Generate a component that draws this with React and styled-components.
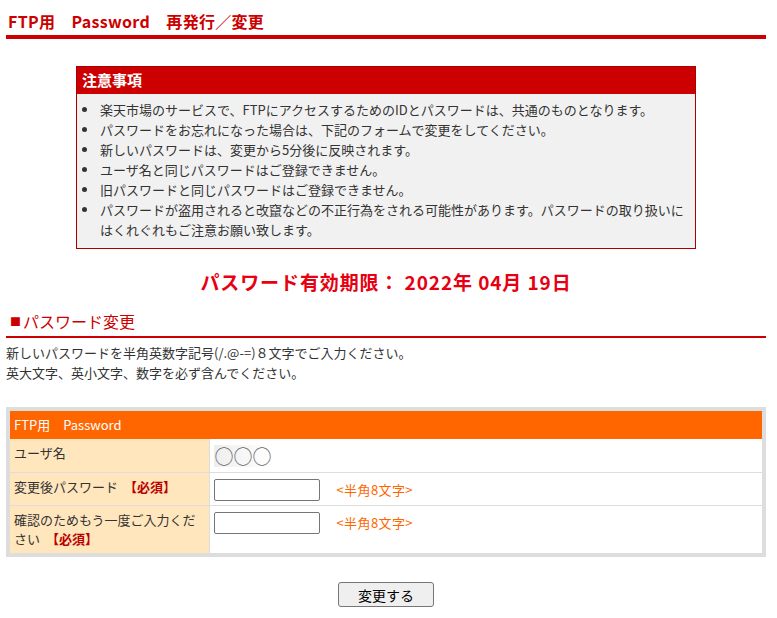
import React from 'react'
import styled, { createGlobalStyle } from 'styled-components'

const GlobalStyle = createGlobalStyle`
body {
  margin: 0;
  background: #fff;
  font-family: "Noto Sans CJK JP", "Liberation Sans", sans-serif;
  color: #333;
}
`

const Page = styled.div`
width: 760px;
margin-left: 6px;
`

const PageTitle = styled.h1`
margin: 0;
padding: 9px 0 2px 2px;
font-size: 16px;
line-height: 24px;
font-weight: bold;
letter-spacing: 0.3px;
color: #c00;
border-bottom: 4px solid #c00;
white-space: pre;
`

const Notice = styled.div`
width: 618px;
margin: 27px 0 0 70px;
border: 1px solid #a00;
background: #f1f1f1;
`

const NoticeHead = styled.div`
height: 27px;
background: #c00;
color: #fff;
font-size: 15px;
font-weight: bold;
line-height: 25px;
padding-left: 5px;
`

const NoticeList = styled.ul`
margin: 0;
padding: 6px 8px 8px 22px;
font-size: 13px;
line-height: 20px;
color: #333;
li { padding-left: 1px; }
`

const Expiry = styled.p`
margin: 19px 0 0;
text-align: center;
font-size: 19px;
line-height: 28px;
font-weight: bold;
letter-spacing: 0.9px;
color: #e60012;
`

const SectionHead = styled.h2`
margin: 12px 0 0;
padding: 2px 0 4px 4px;
font-size: 16px;
line-height: 22px;
font-weight: normal;
color: #c00;
border-bottom: 2px solid #c00;
`

const Square = styled.span`
font-size: 11px;
margin-right: 2px;
vertical-align: 2px;
`

const Lead = styled.p`
margin: 5px 0 0;
font-size: 13px;
line-height: 20px;
color: #333;
`

const FormFrame = styled.div`
margin-top: 24px;
border: 4px solid #ddd;
`

const FormTable = styled.table`
width: 100%;
table-layout: fixed;
border-collapse: collapse;
font-size: 13px;
`

const HeadCell = styled.th`
height: 28px;
padding: 0 4px;
background: #f60;
color: #fff;
font-weight: normal;
text-align: left;
line-height: 28px;
`

const Row = styled.tr`
& + & td, & + & th { border-top: 1px solid #ddd; }
`

const Label = styled.th`
padding: 4px 4px 3px;
background: #ffe6bd;
border-right: 1px solid #ddd;
font-weight: normal;
text-align: left;
vertical-align: top;
line-height: 19px;
height: ${p => p.$h}px;
box-sizing: border-box;
color: #333;
`

const Required = styled.span`
color: #b00;
font-weight: bold;
margin-left: 6px;
`

const Field = styled.td`
padding: 6px 4px 0;
vertical-align: top;
`

const Masked = styled.span`
display: inline-block;
padding: 0 1px;
font-size: 19px;
line-height: 22px;
color: #666;
background: linear-gradient(to right, #eee, #fff);
`

const TextInput = styled.input`
width: 106px;
height: 22px;
box-sizing: border-box;
border: 1px solid #767676;
border-radius: 2px;
padding: 0 4px;
vertical-align: middle;
`

const Hint = styled.span`
margin-left: 17px;
color: #f60;
font-size: 13px;
letter-spacing: 0.4px;
vertical-align: middle;
`

const Actions = styled.div`
display: flex;
justify-content: center;
margin-top: 25px;
`

const SubmitButton = styled.button`
width: 96px;
height: 25px;
font-family: "Noto Sans CJK JP", sans-serif;
font-size: 14px;
line-height: 20px;
color: #000;
background: #efefef;
border: 1px solid #767676;
border-radius: 3px;
padding: 0;
`

const notes = [
  '楽天市場のサービスで、FTPにアクセスするためのIDとパスワードは、共通のものとなります。',
  'パスワードをお忘れになった場合は、下記のフォームで変更をしてください。',
  '新しいパスワードは、変更から5分後に反映されます。',
  'ユーザ名と同じパスワードはご登録できません。',
  '旧パスワードと同じパスワードはご登録できません。',
  'パスワードが盗用されると改竄などの不正行為をされる可能性があります。パスワードの取り扱いにはくれぐれもご注意お願い致します。',
]

const App = () => {
  return (
    <Page>
      <GlobalStyle />
      <PageTitle>FTP用　Password　再発行／変更</PageTitle>
      <Notice>
        <NoticeHead>注意事項</NoticeHead>
        <NoticeList>
          {notes.map(n => <li key={n}>{n}</li>)}
        </NoticeList>
      </Notice>
      <Expiry>パスワード有効期限： 2022年 04月 19日</Expiry>
      <SectionHead><Square>■</Square>パスワード変更</SectionHead>
      <Lead>
        新しいパスワードを半角英数字記号(/.@-=)８文字でご入力ください。<br />
        英大文字、英小文字、数字を必ず含んでください。
      </Lead>
      <FormFrame>
        <FormTable>
          <colgroup>
            <col style={{ width: 199 }} />
            <col />
          </colgroup>
          <thead>
            <tr><HeadCell colSpan={2}>FTP用　Password</HeadCell></tr>
          </thead>
          <tbody>
            <Row>
              <Label $h={33}>ユーザ名</Label>
              <Field><Masked>○○○</Masked></Field>
            </Row>
            <Row>
              <Label $h={33}>変更後パスワード<Required>【必須】</Required></Label>
              <Field><TextInput type="password" /><Hint>&lt;半角8文字&gt;</Hint></Field>
            </Row>
            <Row>
              <Label $h={48}>確認のためもう一度ご入力ください<Required>【必須】</Required></Label>
              <Field><TextInput type="password" /><Hint>&lt;半角8文字&gt;</Hint></Field>
            </Row>
          </tbody>
        </FormTable>
      </FormFrame>
      <Actions>
        <SubmitButton>変更する</SubmitButton>
      </Actions>
    </Page>
  )
}

export default App
